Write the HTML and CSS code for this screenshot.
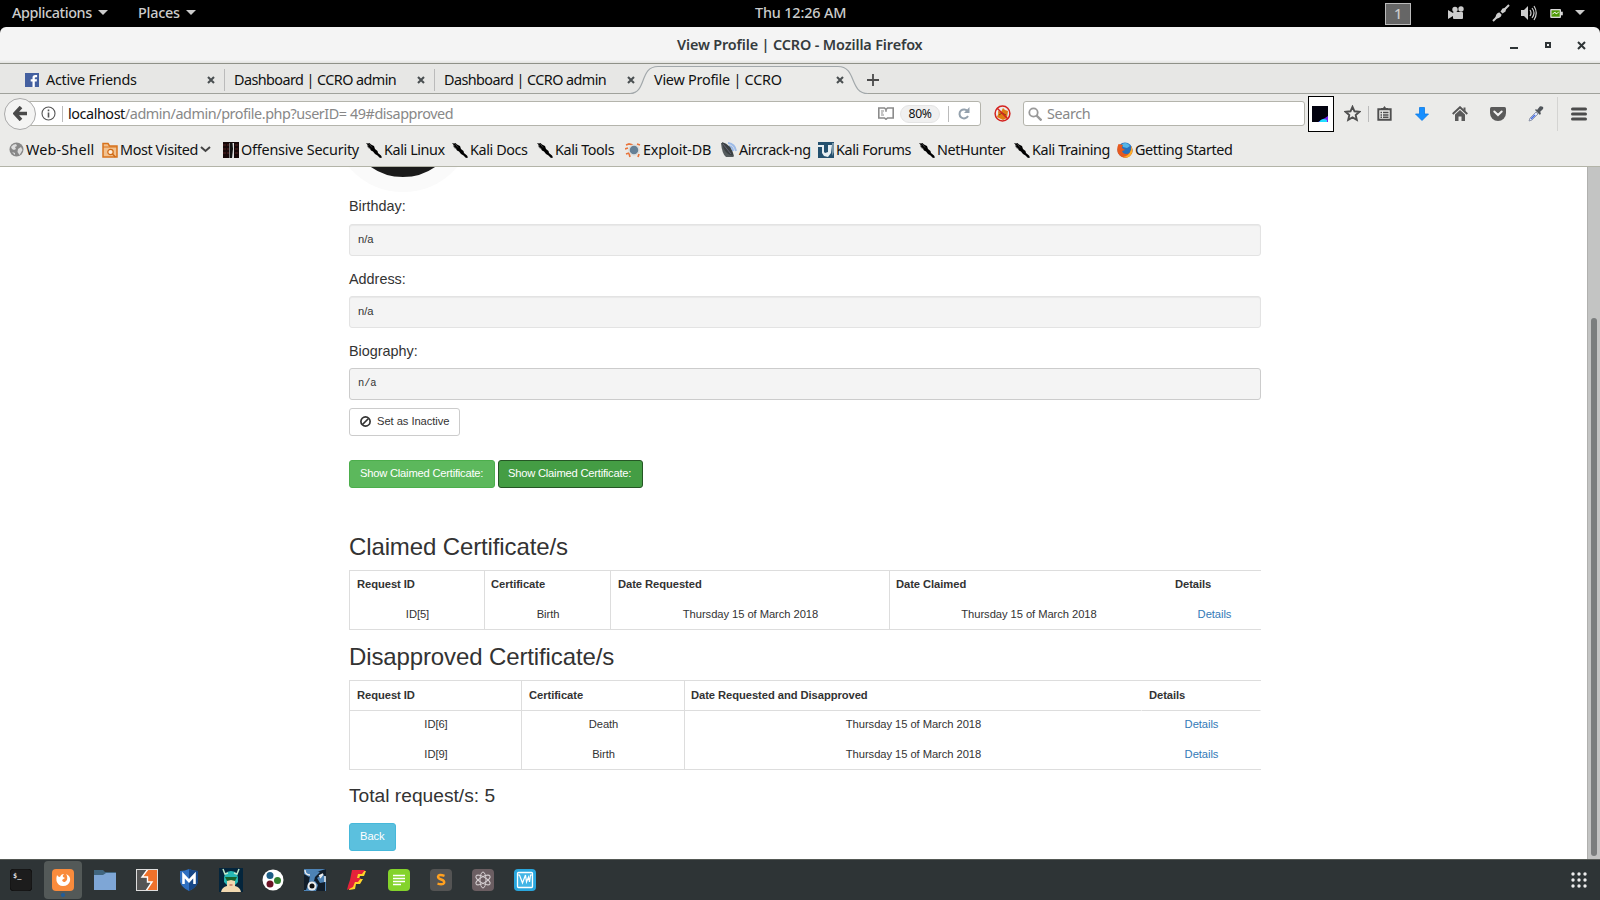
FILE: index.html
```html
<!DOCTYPE html>
<html lang="en">
<head>
<meta charset="utf-8">
<title>View Profile | CCRO</title>
<link rel="stylesheet" href="styles.css">
</head>
<body>
<svg class="defs" width="0" height="0">
  <symbol id="kali" viewBox="0 0 16 16"><path d="M0 1l2 .5L3.500 1l1.500 1.500L8 4l1 3 2.500 2 .5 2 3 2.500 1 2-2 .5-2.500-2.500L9 12 7 9.500 5 8.500 3.500 6 1.500 5 2 3.500z" fill="#000"/><path d="M1 3.500l2 .5M3 1.500l3 4M2.500 6l2 .5" stroke="#555" stroke-width=".7"/></symbol>
  <symbol id="x" viewBox="0 0 8 8"><path d="M1 1l6 6M7 1l-6 6" stroke="#4b5052" stroke-width="2.1"/></symbol>
</svg>

<header class="panel">
  <span class="menu">Applications <i class="tri"></i></span>
  <span class="menu places">Places <i class="tri"></i></span>
  <span class="clock">Thu 12:26 AM</span>
  <span class="workspace">1</span>
  <svg width="16" height="14" viewBox="0 0 16 14" fill="#ccc"><circle cx="7" cy="3.500" r="2.700"/><circle cx="13" cy="3" r="2.700"/><rect x="5" y="6" width="10" height="7" rx="1"/><path d="M0 4v9l5-3V7z"/></svg>
  <svg width="18" height="18" viewBox="0 0 18 18"><path d="M1 17l4-4M13 5l4-4" stroke="#ccc" stroke-width="2"/><path d="M3.500 14.500c0-4 2-6 4-6l2 2c0 2-2 4-6 4zM8.500 7.500l2-3 4-1-1 4-3 2z" fill="#ccc"/></svg>
  <svg width="17" height="16" viewBox="0 0 17 16"><path d="M1 5h3l4-4v14l-4-4H1z" fill="#ccc"/><path d="M10 5q2 3 0 6M12 3q4 5 0 10M14 1q4.500 7 0 14" fill="none" stroke="#ccc" stroke-width="1.200"/></svg>
  <svg width="13" height="9" viewBox="0 0 14 10"><rect x="0" y="0" width="12" height="10" rx="1" fill="#d8d8d8"/><rect x="12" y="3" width="2" height="4" fill="#d8d8d8"/><rect x="1.500" y="1.500" width="9" height="7" fill="#4e9a06"/><path d="M2.500 5.500l3-2 1 2 3-2" stroke="#fff" fill="none"/></svg>
  <i class="tri"></i>
</header>

<div class="titlebar">
  <span class="wtitle">View Profile | CCRO - Mozilla Firefox</span>
  <svg class="wmin" width="8" height="2"><rect width="8" height="2" fill="#2e3436"/></svg>
  <svg class="wmax" width="6" height="6"><rect x="1" y="1" width="4" height="4" fill="none" stroke="#2e3436" stroke-width="2"/></svg>
  <svg width="9" height="9" viewBox="0 0 9 9"><path d="M1 1l7 7M8 1l-7 7" stroke="#2e3436" stroke-width="2"/></svg>
</div>

<div class="tabs">
  <div class="tab first">
    <svg width="14" height="14" viewBox="0 0 14 14"><rect width="14" height="14" fill="#4460a0"/><path d="M7.500 14V8.500H5.700V6.300h1.800V4.600Q7.500 2 10.200 2h1.900v2.200h-1.400q-.9 0-.9.900v1.200h2.200l-.3 2.200H9.800V14z" fill="#fff"/></svg>
    <span>Active Friends</span><svg class="close" width="8" height="8"><use href="#x"/></svg>
  </div>
  <div class="tab"><span class="tight">Dashboard | CCRO admin</span><svg class="close" width="8" height="8"><use href="#x"/></svg></div>
  <div class="tab last"><span class="tight">Dashboard | CCRO admin</span><svg class="close" width="8" height="8"><use href="#x"/></svg></div>
  <div class="tab active">
    <svg class="shape" width="238" height="30" viewBox="0 0 238 30"><path d="M0 29C16 29 9 1.500 28 1.500H208C227 1.500 220 28.500 237 28.500V30H0z" fill="#ebebe9"/><path d="M0 28.500C17 28.500 9 1.500 28 1.500H208C227 1.500 219 28.500 238 28.500" fill="none" stroke="#a2a8ab" stroke-width="1.200"/></svg>
    <span>View Profile | CCRO</span><svg class="close" width="8" height="8"><use href="#x"/></svg>
  </div>
  <svg class="plus" width="12" height="12"><path d="M6 0v12M0 6h12" stroke="#4b4b4b" stroke-width="1.800"/></svg>
</div>

<div class="nav">
  <div class="back"><svg width="14" height="15" viewBox="0 0 14 15"><path d="M8 1L2 7.500 8 14M2 7.500h12" fill="none" stroke="#4a4a4a" stroke-width="3.600"/></svg></div>
  <div class="url">
    <svg class="info" width="15" height="15" viewBox="0 0 15 15"><circle cx="7.500" cy="7.500" r="6.500" fill="none" stroke="#555" stroke-width="1.100"/><path d="M7.500 6.500v5M7.500 3.500v1.700" stroke="#555" stroke-width="1.600"/></svg>
    <i class="bar"></i>
    <span class="addr"><b>localhost</b>/admin/admin/profile.php?userID= 49#disapproved</span>
    <svg width="16" height="13" viewBox="0 0 16 13" fill="none" stroke="#8b8b8b"><path d="M8 2.500L6.500 1H.8v10h5.700L8 12.300 9.500 11h5.700V1H9.500L8 2.500v2.300" stroke-width="1.600"/><path d="M3 4h3M3 6h2.200M3 8h3" stroke-width="1.100"/></svg>
    <span class="pct">80%</span>
    <i class="bar"></i>
    <svg class="reload" width="12" height="13" viewBox="0 0 12 13"><path d="M9.800 4.500A4.500 4.500 0 1 0 10 9" fill="none" stroke="#94a1ad" stroke-width="2"/><path d="M11.500 0v6H6z" fill="#94a1ad"/></svg>
  </div>
  <svg class="noscript" width="17" height="17" viewBox="0 0 17 17"><path d="M3 12q2-3 1-6l3 1 2-4 2 2 3 1-1 7-4 2z" fill="#df7c13"/><path d="M5 10l3-2 4 2" stroke="#784718" fill="none"/><circle cx="8.500" cy="8.500" r="7.400" fill="none" stroke="#d4221f" stroke-width="1.500"/><path d="M3 3l11 11" stroke="#d4221f" stroke-width="1.500"/></svg>
  <div class="search"><svg width="14" height="14" viewBox="0 0 14 14"><circle cx="5.500" cy="5.500" r="4.200" fill="none" stroke="#999" stroke-width="1.800"/><path d="M8.500 8.500l5 5" stroke="#999" stroke-width="2.400"/></svg><span>Search</span></div>
  <div class="cat"><svg width="16" height="16" viewBox="0 0 16 16"><rect width="16" height="16" fill="#02020f"/><path d="M16 10v6H6l5-3 2-1z" fill="#7322f5"/><path d="M7 16q3-5 8-2v2z" fill="#20dfff"/></svg></div>
  <svg class="star" width="17" height="17" viewBox="0 0 17 17"><path d="M8.500 1.800l2 4.500 4.900.5-3.700 3.300 1.100 4.800-4.300-2.500-4.300 2.500 1.100-4.800L1.600 6.800l4.900-.5z" fill="none" stroke="#4f4f4f" stroke-width="1.900"/></svg>
  <i class="bar"></i>
  <svg class="clip" width="15" height="15" viewBox="0 0 15 15"><path d="M1.300 3.300h12.400v10.400H1.300z" fill="none" stroke="#4f4f4f" stroke-width="1.900"/><path d="M4 4V2h2L7.500 0 9 2h2v2z" fill="#4f4f4f"/><path d="M3.500 6.500h1.500M6 6.500h5.500M3.500 9h1.500M6 9h5.500M3.500 11.300h1.500M6 11.300h5.500" stroke="#4f4f4f" stroke-width="1.400"/></svg>
  <svg class="down" width="14" height="14" viewBox="0 0 14 14"><path d="M4.500.5h5V7h4L7 13.500.500 7h4z" fill="#178fff" stroke="#0b7ae4" stroke-width=".8"/></svg>
  <svg class="home" width="16" height="15" viewBox="0 0 16 15"><path d="M.7 8L8 1.200 15.300 8" fill="none" stroke="#555" stroke-width="1.900"/><path d="M8 4l5 4.500V15H9.500v-4.500h-3V15H3V8.500zM11.500 1.500h2v4l-2-2z" fill="#5a5a5a"/></svg>
  <svg class="pocket" width="16" height="14" viewBox="0 0 16 14"><path d="M1.500 0h13Q16 0 16 1.500V6A8 8 0 0 1 0 6V1.500Q0 0 1.500 0z" fill="#5a5a5a"/><path d="M4.300 4.500L8 8l3.700-3.500" fill="none" stroke="#f2f2f2" stroke-width="2" stroke-linecap="round"/></svg>
  <svg class="picker" width="16" height="16" viewBox="0 0 16 16"><path d="M1 15l1-3 6-6 2 2-6 6z" fill="#dde6ff" stroke="#7b8499" stroke-width=".8"/><path d="M3 13l4-4" stroke="#4a6fe0" stroke-width="1.600"/><path d="M7 4l5 5 1-2-1-1 3-3q1-2-1-2.500-2-1-3 1L9 4 8 3z" fill="#50555b"/></svg>
  <i class="bar tall"></i>
  <svg width="16" height="14" viewBox="0 0 16 14"><path d="M1.500 2h13M1.500 7h13M1.500 12h13" stroke="#4c4c4c" stroke-width="3" stroke-linecap="round"/></svg>
</div>

<div class="bookmarks">
  <span class="wide"><svg width="15" height="15" viewBox="0 0 15 15"><circle cx="7.500" cy="7.500" r="7" fill="#888"/><path d="M2 5q2-3 5-3l1 2-2 1 1 2-2 1-2-1zM9 7l3-2 1.500 3-3 5-2-3zM3 10l3 1 0 2z" fill="#ddd"/></svg>Web-Shell</span>
  <span><svg width="16" height="16" viewBox="0 0 16 16"><path d="M1 15V1.500h5L7.500 4h7.500v11z" fill="#f3c28f" stroke="#d8731d" stroke-width="1.500"/><path d="M1 5h14" stroke="#d8731d"/><circle cx="8.500" cy="10" r="2.700" fill="#fff0dc" stroke="#cf6a16" stroke-width="1.200"/><path d="M10.500 12l3 3" stroke="#cf6a16" stroke-width="1.500"/></svg>Most Visited<svg width="11" height="7" viewBox="0 0 11 7"><path d="M1 1l4.500 4L10 1" fill="none" stroke="#444" stroke-width="2"/></svg></span>
  <span class="mid"><svg width="16" height="16" viewBox="0 0 16 16"><path d="M0 0h16v16H0z" fill="#160808"/><path d="M0 3h16M0 7h16M0 11h16" stroke="#552020" stroke-dasharray="3 1"/><path d="M6 1h5v15H6z" fill="#ddd"/><path d="M6.500 1h3l.5 6-1 9H6.500z" fill="#111"/></svg>Offensive Security</span>
  <span><svg width="16" height="16"><use href="#kali"/></svg>Kali Linux</span>
  <span><svg width="16" height="16"><use href="#kali"/></svg>Kali Docs</span>
  <span><svg width="16" height="16"><use href="#kali"/></svg>Kali Tools</span>
  <span class="mid"><svg width="16" height="16" viewBox="0 0 16 16"><path d="M1 3l3-1 4 1M0 7l3-1M1 12l3-1 1 4M12 2l3 1M14 12l-1 3" fill="none" stroke="#e8743b" stroke-width="1.700"/><circle cx="9" cy="8" r="5" fill="#658096" stroke="#dcdcda" stroke-width="1.500"/></svg>Exploit-DB</span>
  <span><svg width="16" height="16" viewBox="0 0 16 16"><path d="M7 1q7 1 8 8M8 4q4 1 4 5" stroke="#9dbbe8" stroke-width="2" fill="none"/><path d="M0 1q1 11 5 14h8L2 1z" fill="#555b5d"/><path d="M1 0q9 2 12 14Q3 13 1 0z" fill="#3b4042"/><path d="M2 2l8 10" stroke="#667"/></svg>Aircrack-ng</span>
  <span><svg width="16" height="16" viewBox="0 0 16 16"><rect width="16" height="16" fill="#24506e"/><path d="M0 3h6v7l1 1 3-1V3h4l-1 8-3 4-4-1-2-3V5H0z" fill="#e7eef2"/><path d="M14 1h2v9l-2 4z" fill="#7895a6"/></svg>Kali Forums</span>
  <span><svg width="16" height="16"><use href="#kali"/></svg>NetHunter</span>
  <span><svg width="16" height="16"><use href="#kali"/></svg>Kali Training</span>
  <span><svg width="16" height="16" viewBox="0 0 16 16"><circle cx="8" cy="8" r="7.500" fill="#2871bd"/><path d="M5 2q5-3 8 2l-3 2-4-1z" fill="#54b6e8"/><path d="M1.500 2Q-2 10 4 14.500q7 3.500 11-3 1.500-4-1-7.500 1 7-4 8-4 .5-5-3l3-1-3-2q0-2 1-3z" fill="#e75a1f"/><path d="M14 4q2 4 1 7-3 6-9 4 6-1 8-7z" fill="#ffb128"/></svg>Getting Started</span>
</div>

<div class="view">
  <main class="page">
    <div class="avatar"><i></i></div>
    <h4>Birthday:</h4>
    <div class="well">n/a</div>
    <h4>Address:</h4>
    <div class="well">n/a</div>
    <h4>Biography:</h4>
    <pre class="well bio">n/a</pre>
    <a class="btn inactive"><svg width="11" height="11" viewBox="0 0 11 11"><circle cx="5.500" cy="5.500" r="4.600" fill="none" stroke="#333" stroke-width="1.700"/><path d="M2.500 8.500l6-6" stroke="#333" stroke-width="1.700"/></svg>Set as Inactive</a>
    <div class="row"><a class="btn green">Show Claimed Certificate:</a><a class="btn green dark">Show Claimed Certificate:</a></div>
    <h2>Claimed Certificate/s</h2>
    <div class="tbl claimed">
      <b>Request ID</b><b>Certificate</b><b>Date Requested</b><b>Date Claimed</b><b>Details</b>
      <span>ID[5]</span><span>Birth</span><span>Thursday 15 of March 2018</span><span>Thursday 15 of March 2018</span><span class="link">Details</span>
    </div>
    <h2>Disapproved Certificate/s</h2>
    <div class="tbl disapproved">
      <b>Request ID</b><b>Certificate</b><b>Date Requested and Disapproved</b><b>Details</b>
      <span>ID[6]</span><span>Death</span><span>Thursday 15 of March 2018</span><span class="link">Details</span>
      <span>ID[9]</span><span>Birth</span><span>Thursday 15 of March 2018</span><span class="link">Details</span>
    </div>
    <h3>Total request/s: 5</h3>
    <a class="btn info-btn">Back</a>
  </main>
  <div class="scroll"><i></i></div>
</div>

<footer class="dock">
  <span><svg viewBox="0 0 22 22"><rect width="22" height="22" rx="4" fill="#1c1c1c" stroke="#111"/><text x="3" y="9" class="term">$_</text></svg></span>
  <span class="on"><svg viewBox="0 0 22 22"><rect width="22" height="22" rx="4" fill="#f98b3c"/><path d="M5 6q1 2 3 2 1-3 4-3-2 2-1 3l2 1-3 2q1 3 3.500 1.500T15 7q-.5-1.500-1-2 5 2 4 7-1.500 5-7 5-5 0-6.500-5Q4 9 5 6z" fill="#fff"/></svg><i></i></span>
  <span><svg viewBox="0 0 22 22"><path d="M0 1h9l2 2h11v7H0z" fill="#40657f"/><path d="M0 6h9l3-2h10v17H0z" fill="#7ea6d6"/></svg></span>
  <span><svg viewBox="0 0 22 22"><path d="M0 0h22v22H0z" fill="#555"/><path d="M12 0h10v22H10l6-9h-5V9l-5-1z" fill="#f0722b"/><path d="M12 0L6 8h5.500v5H16l-6 9" fill="none" stroke="#fff" stroke-width="1.400"/><rect x=".5" y=".5" width="21" height="21" fill="none" stroke="#ddd"/></svg></span>
  <span><svg viewBox="0 0 22 22"><path d="M2 2q5 0 9-2 4 2 9 2v11q-2 6-9 9-7-3-9-9z" fill="#2f6fc0"/><path d="M11 0q4 2 9 2v11q-2 6-9 9z" fill="#174787"/><path d="M5.500 15V6l5.500 6 5.500-6v9" fill="none" stroke="#fff" stroke-width="2.600"/></svg></span>
  <span><svg class="big" viewBox="0 0 24 24"><rect width="24" height="24" fill="#04253c"/><path d="M2 24q1-5 6-6V9h8v9q5 1 6 6z" fill="#f0d8b0"/><path d="M5 14Q4 3 12 3t7 11l-3 3V12h-8v5z" fill="#26b8b5"/><path d="M6 9h12l-2 4-4-1-4 1z" fill="#17612b"/><path d="M4 1l2 5 3-1M20 1l-2 5-3-1" stroke="#bfe8ca" fill="none" stroke-width="1.500"/><path d="M10.500 17h3" stroke="#b3443b"/></svg></span>
  <span><svg viewBox="0 0 22 22"><circle cx="11" cy="11" r="10.500" fill="#fff"/><circle cx="8" cy="6.500" r="3.500" fill="#1d5e86"/><circle cx="15.500" cy="11.500" r="3.500" fill="#31802f"/><circle cx="8" cy="15" r="3.500" fill="#6d1326"/></svg></span>
  <span><svg viewBox="0 0 22 22"><rect width="22" height="22" fill="#4d83b6"/><path d="M0 5l5 3 7-5 10-3v8l-4-3-5 4 3 5 5-1v9h-9l2-6-3-4-6 1-3 8H0z" fill="#111d2a"/><path d="M6 6l7-4 3 1-5 5-1 4-5 1z" fill="#4d83b6"/><circle cx="8" cy="17" r="4.500" fill="#eee"/><circle cx="8" cy="17" r="2.500" fill="#111"/><path d="M1 1q0 5 5 5M15 7l4-2-3 4M21 7v6" fill="none" stroke="#eee" stroke-width="1.400"/></svg></span>
  <span><svg viewBox="0 0 22 22"><path d="M7 2h13l-2 5h-4l-1 3h4l-3 5h-4l-1 5-6 1z" fill="#ffd42a"/><path d="M6 1h13l-3 4h-4l-1 4h4l-3 4H9l-2 5-6 3q1-5 3-10z" fill="#e5223a"/></svg></span>
  <span><svg viewBox="0 0 22 22"><rect width="22" height="22" rx="4" fill="#84d32b"/><path d="M5 6.500h12M5 9.500h12M5 12.500h12M5 15.500h8" stroke="#fff" stroke-width="1.400"/></svg></span>
  <span><svg viewBox="0 0 22 22"><rect width="22" height="22" rx="4" fill="#545454"/><path d="M14.500 6.800q-6-2-6.500.9 0 1.800 3.200 2.800t3 3.200q-1 2.500-6.700 1" fill="none" stroke="#ffa01f" stroke-width="2.400"/></svg></span>
  <span><svg viewBox="0 0 22 22"><rect width="22" height="22" rx="4" fill="#6b5e62"/><g fill="none" stroke="#d5cfd1" stroke-width="1"><ellipse cx="11" cy="11" rx="3" ry="8"/><ellipse cx="11" cy="11" rx="3" ry="8" transform="rotate(60 11 11)"/><ellipse cx="11" cy="11" rx="3" ry="8" transform="rotate(120 11 11)"/></g></svg></span>
  <span><svg viewBox="0 0 22 22"><rect width="22" height="22" rx="4" fill="#29a6dd"/><rect x="3.500" y="3.500" width="15" height="15" rx="1" fill="#42b5e6" stroke="#fff" stroke-width="1.300"/><path d="M4 6h1.500l3 8 3-8 1 7 2-5 1 5 1-7H18" fill="none" stroke="#fff" stroke-width="1.200"/></svg></span>
  <svg class="apps" width="16" height="16" viewBox="0 0 16 16" fill="#eee"><circle cx="2" cy="2" r="1.700"/><circle cx="8" cy="2" r="1.700"/><circle cx="14" cy="2" r="1.700"/><circle cx="2" cy="8" r="1.700"/><circle cx="8" cy="8" r="1.700"/><circle cx="14" cy="8" r="1.700"/><circle cx="2" cy="14" r="1.700"/><circle cx="8" cy="14" r="1.700"/><circle cx="14" cy="14" r="1.700"/></svg>
</footer>
</body>
</html>
```
FILE: styles.css
```css
* { box-sizing: border-box; }
body { margin: 0; width: 1600px; height: 900px; overflow: hidden; background: #000; color: #111; font: 14.4px/20px "Noto Sans", "Open Sans", sans-serif; letter-spacing: -0.4px; white-space: nowrap; display: flex; flex-direction: column; }
svg { display: block; flex: none; }
.defs { position: absolute; }

/* Desktop panel */
.panel { height: 27px; flex: none; display: flex; align-items: center; color: #ccc; font-weight: 500; padding: 0 0 2px 12px; background: #000; }
.menu { display: flex; align-items: center; gap: 6px; width: 126px; }
.menu.places { width: 617px; letter-spacing: -0.25px; }
.tri { border: 5px solid transparent; border-top-color: #ccc; border-bottom: 0; width: 0; }
.panel > .tri { margin-left: -1px; }
.clock { width: 630px; letter-spacing: -0.15px; }
.workspace { width: 26px; height: 22px; border: 1px solid #bbb; background: #666; text-align: center; margin: 2px 37px 0 0; }
.panel svg { margin-top: 1px; }
.panel svg:nth-of-type(1) { margin-right: 28px; }
.panel svg:nth-of-type(2) { margin-right: 10px; }
.panel svg:nth-of-type(3) { margin-right: 13px; }
.panel svg:nth-of-type(4) { margin-right: 13px; }

/* Window title */
.titlebar { height: 37px; flex: none; display: flex; align-items: center; background: linear-gradient(#f4f4f4 33px, #e2e2df); border-bottom: 1px solid #8f9188; border-radius: 6px 6px 0 0; padding-left: 677px; color: #353b3d; font-weight: 600; }
.wtitle { width: 833px; flex: none; letter-spacing: -0.13px; }
.wmin { margin: 6px 27px 0 0; }
.wmax { margin-right: 26px; }

/* Tabs */
.tabs { height: 30px; flex: none; display: flex; background: #e7e7e5; border-bottom: 1px solid #a0a29c; padding: 2px 0 0 15px; align-items: center; letter-spacing: -0.24px; }
.tab { width: 210px; height: 22px; display: flex; align-items: center; padding: 0 9px 0 9px; border-right: 1px solid #bbb; }
.tab.first svg:first-child { margin: 0 7px 0 1px; }
.tab.last { border-color: transparent; }
.tab .close { margin-left: auto; }
.tight { letter-spacing: -0.57px; }
.tab.active { position: relative; border: 0; padding-right: 11px; }
.tab.active span, .tab.active .close { position: relative; }
.shape { position: absolute; left: -15px; top: -4px; }
.plus { margin-left: 12px; }

/* Navigation */
.nav { height: 39px; flex: none; display: flex; align-items: center; background: #ebebe9; padding-left: 4px; }
.back { width: 32px; height: 32px; flex: none; border: 1px solid #aaa; border-radius: 50%; background: #f4f4f3; display: flex; align-items: center; justify-content: center; z-index: 1; }
.url { height: 25px; width: 953px; margin-left: -8px; border: 1px solid #b4b4ac; border-radius: 0 3px 3px 0; background: #fff; display: flex; align-items: center; flex: none; padding-left: 12px; }
.bar { width: 1px; height: 16px; background: #bbb; flex: none; }
.info { margin-right: 6px; }
.addr { width: 815px; padding-left: 5px; color: #888; letter-spacing: -0.44px; }
.addr b { font-weight: 400; color: #111; }
.pct { width: 40px; height: 18px; margin: 0 8px 0 6px; border-radius: 9px; background: #f0f0f0; border: 1px solid #e5e5e5; line-height: 16px; font-size: 12.2px; text-align: center; }
.reload { margin-left: 9px; }
.noscript { margin: 0 12px 0 13px; }
.search { width: 282px; height: 25px; border: 1px solid #b4b4ac; border-radius: 3px; background: #fff; display: flex; align-items: center; gap: 5px; padding-left: 4px; color: #888; flex: none; }
.cat { width: 26px; height: 36px; margin: 0 10px 0 3px; border: 1px solid #000; background: #fff; display: flex; align-items: center; padding-left: 3px; flex: none; }
.star { margin-right: 7px; }
.clip { margin: 0 23px 0 8px; }
.down { margin-right: 23px; }
.home { margin-right: 22px; }
.pocket { margin-right: 22px; }
.picker { margin-right: 13px; }
.tall { height: 34px; background: #d4d4d2; margin-right: 13px; }

/* Bookmarks */
.bookmarks { height: 34px; flex: none; display: grid; grid-template-columns: 93px 121px 143px 86px 85px 88px 96px 97px 101px 95px 103px 130px; align-items: center; background: #ebebe9; border-bottom: 1px solid #b3b4a8; padding-left: 9px; }
.bookmarks span { display: flex; align-items: center; gap: 2px; }
.bookmarks .wide { letter-spacing: 0.15px; }
.bookmarks .mid { letter-spacing: -0.22px; }

/* Page */
.view { height: 692px; flex: none; display: flex; justify-content: space-between; background: #fff; font: 11.2px/16px "Liberation Sans", Arial, sans-serif; letter-spacing: -0.06px; color: #333; }
.page { width: 912px; margin-left: 349px; }
.avatar { height: 25px; overflow: hidden; display: flex; align-items: flex-end; margin-left: -17px; }
.avatar i { width: 142px; height: 142px; border-radius: 50%; border: 15.5px solid #fafafa; background: #1b1b1b; }
h2, h3, h4 { margin: 0; font-weight: 400; letter-spacing: 0; }
h4 { font-size: 14.4px; line-height: 16px; margin: 6px 0 10px; }
.well { height: 32px; margin: 0; padding: 6px 8px; border: 1px solid #e3e3e3; border-radius: 3px; background: #f4f4f4; box-shadow: inset 0 1px 1px rgba(0,0,0,.05); }
.well + h4 { margin: 15px 0 9px; }
.bio { padding-top: 7px; border-color: #ccc; font: 10.4px/15px "Liberation Mono", monospace; box-shadow: none; }
.btn { display: flex; align-items: center; height: 28px; padding: 0 10px 2px; border: 1px solid #ccc; border-radius: 3px; }
.inactive { margin-top: 8px; gap: 6px; width: 111px; }
.row { display: flex; gap: 3px; margin-top: 24px; letter-spacing: -0.22px; }
.green { width: 146px; background: #5cb85c; border-color: #4cae4c; color: #fff; }
.dark { width: 145px; padding-left: 9px; background: #449d44; border-color: #255625; }
h2 { font-size: 24px; line-height: 26px; letter-spacing: -0.12px; }
.row + h2 { margin: 46px 0 10px; }
.tbl { display: grid; border: 1px solid #ddd; border-right: 0; text-align: center; }
.tbl > * { padding: 5px 6px 0 7px; border-right: 1px solid #ddd; height: 29px; }
.tbl b { text-align: left; padding: 6px 0 0 7px; }
.claimed { grid-template-columns: 135px 126px 279px 278px 93px; }
.claimed b { padding-top: 5px; }
.claimed b:nth-of-type(2), .claimed b:nth-of-type(4) { padding-left: 6px; }
.claimed span, .disapproved span:nth-of-type(n+5) { padding-top: 6px; }
.claimed > :nth-child(5n), .claimed > :nth-child(5n+4) { border-right-color: transparent; }
.tbl + h2 { margin: 14px 0 10px; }
.disapproved { grid-template-columns: 172px 163px 457px 119px; }
.disapproved > :nth-child(4n), .disapproved > :nth-child(4n+3) { border-right-color: transparent; }
.disapproved b { height: 30px; border-bottom: 1px solid #ddd; }
.disapproved b:nth-of-type(3) { padding-left: 6px; }
.tbl .link { color: #337ab7; }
h3 { font-size: 19.2px; line-height: 22px; margin: 15px 0 16px; }
.info-btn { width: 47px; background: #5bc0de; border-color: #46b8da; color: #fff; }
.scroll { width: 13px; background: #c3c4c3; border-left: 1px solid #b0b0ae; padding: 151px 0 0 3px; }
.scroll i { display: block; width: 6px; height: 538px; border-radius: 3px; background: #7b7e7e; }

/* Dock */
.dock { height: 41px; flex: none; display: flex; align-items: center; background: #2e3436; border-top: 1px solid #555955; }
.dock span { width: 38px; height: 38px; margin: 0 2px; display: flex; align-items: center; justify-content: center; }
.dock span svg { width: 22px; height: 22px; }
.dock span svg.big { width: 24px; height: 24px; }
.dock .on { background: #535958; border-radius: 4px; position: relative; }
.on i { position: absolute; left: 17px; bottom: 2px; width: 4px; height: 4px; border-radius: 50%; background: #215d9c; }
.term { font: bold 7px "DejaVu Sans Mono", monospace; fill: #ddd; letter-spacing: 0; }
.apps { margin-left: auto; margin-right: 13px; }
```
